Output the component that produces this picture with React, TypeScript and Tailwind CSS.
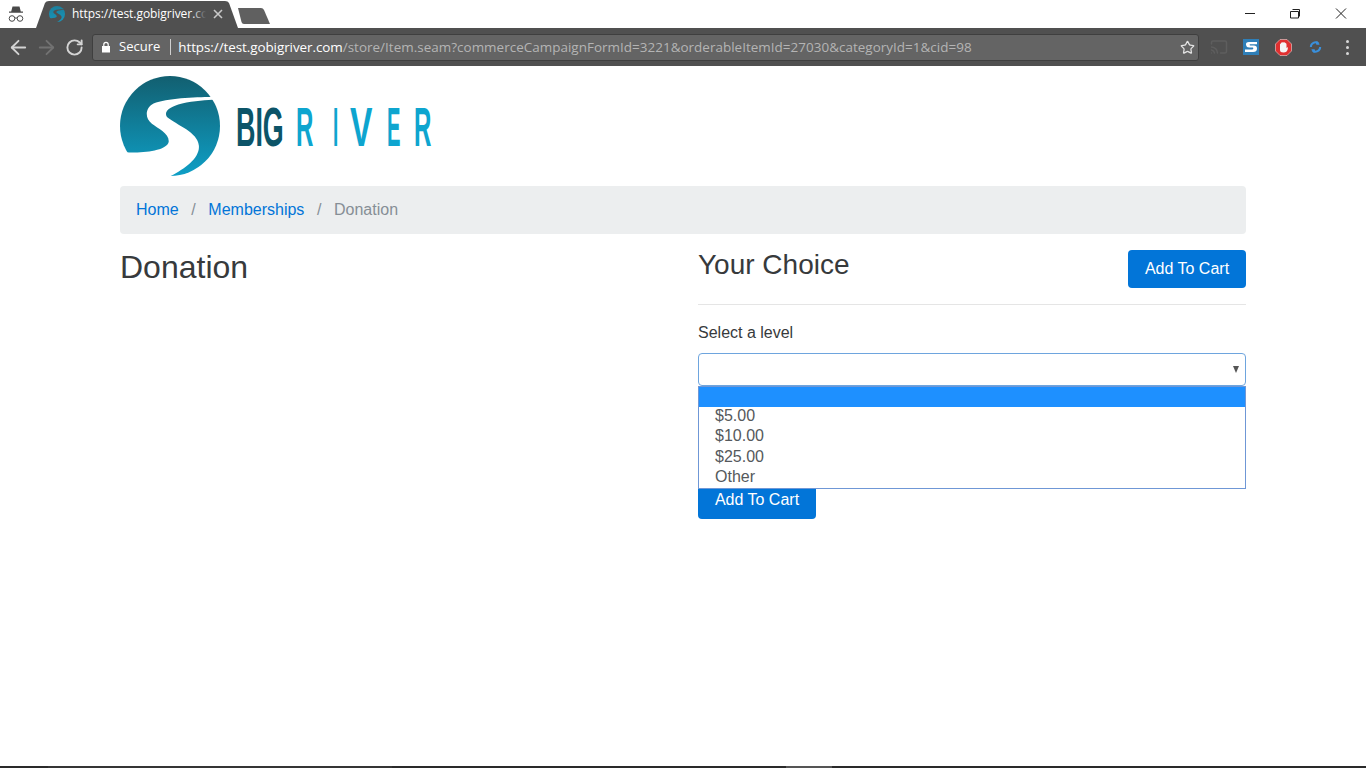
import { ArrowLeft, ArrowRight, RotateCw, Star, Cast } from 'lucide-react';

const chromeFont = "font-['Open_Sans','Noto_Sans',sans-serif]";

function LogoMark({ size, id, river = '#fff', top = '#125f70', bottom = '#0e9fc6' }: { size: number; id: string; river?: string; top?: string; bottom?: string }) {
  return (
    <svg width={size} height={size} viewBox="30 18 298 298" className="shrink-0">
      <defs>
        <linearGradient id={id} x1="0" y1="0" x2="0" y2="1">
          <stop offset="0" stopColor={top} />
          <stop offset="1" stopColor={bottom} />
        </linearGradient>
      </defs>
      <circle cx="179" cy="167" r="149" fill={`url(#${id})`} />
      <path
        d="M305 80C250 82 170 84 130 100C105 112 103 145 125 160C145 175 178 190 175 215C170 240 100 250 45 245L20 330L150 330C200 310 270 270 265 225C262 185 200 165 170 140C160 125 175 110 215 100C250 92 290 90 315 88Z"
        fill={river}
      />
    </svg>
  );
}

function Logo() {
  // letters are real text, squeezed sideways to the logo's condensed widths
  const letters = [
    { c: 'BIG', x: -1, sx: 0.48, fill: '#0c5468' },
    { c: 'R', x: 59, sx: 0.43, fill: '#0ea5cf' },
    { c: 'I', x: 96, sx: 0.34, fill: '#0ea5cf' },
    { c: 'V', x: 113, sx: 0.6, fill: '#0ea5cf' },
    { c: 'E', x: 150, sx: 0.36, fill: '#0ea5cf' },
    { c: 'R', x: 177, sx: 0.43, fill: '#0ea5cf' },
  ];
  return (
    <div className="flex h-[100px] items-center">
      <LogoMark size={100} id="logo-grad" />
      <svg width="212" height="100" viewBox="0 0 212 100" className="ml-[17px] block">
        {letters.map((l) => (
          <text key={l.x} transform={`translate(${l.x} 70) scale(${l.sx} 1)`} fontFamily="'Liberation Sans',sans-serif" fontWeight="bold" fontSize="56" fill={l.fill}>
            {l.c}
          </text>
        ))}
      </svg>
    </div>
  );
}

function TabStrip() {
  return (
    <div className="relative flex h-7 items-center bg-white">
      {/* incognito */}
      <svg width="18" height="17" viewBox="0 0 18 17" className="ml-[7px] shrink-0" fill="#4a4a4a">
        <path d="M5.500 0.500h7l1.300 5H16v1.300H2V5.500h2.200z" />
        <circle cx="5" cy="12.500" r="2.800" fill="none" stroke="#4a4a4a" strokeWidth="1" />
        <circle cx="13" cy="12.500" r="2.800" fill="none" stroke="#4a4a4a" strokeWidth="1" />
        <path d="M7.800 12h2.400" stroke="#4a4a4a" strokeWidth="1" />
      </svg>
      {/* active tab */}
      <div className="relative ml-[11px] flex h-7 w-[202px] shrink-0 items-center">
        <svg width="202" height="28" viewBox="0 0 202 28" className="absolute inset-0" fill="#505050">
          <path d="M0 28L9 3Q10 1 13 1H189Q192 1 193 3L202 28Z" />
        </svg>
        <div className="relative ml-[13px]">
          <LogoMark size={16} id="fav-grad" river="#505050" top="#1c7f9c" bottom="#1796bb" />
        </div>
        <span className={`relative ml-[7px] w-[134px] overflow-hidden whitespace-nowrap text-[12px] tracking-[-0.05px] text-white ${chromeFont}`}>
          https://test.gobigriver.co
          <span className="absolute inset-y-0 right-0 w-[14px] bg-gradient-to-r from-transparent to-[#505050]" />
        </span>
        <svg width="10" height="10" viewBox="0 0 10 10" className="relative ml-[7px]" stroke="#c8c8c8" strokeWidth="1.600">
          <path d="M1 1l8 8M9 1l-8 8" />
        </svg>
      </div>
      {/* new tab */}
      <svg width="34" height="16" viewBox="0 0 34 16" className="mt-[3px] ml-[-1px] shrink-0" fill="#606060">
        <path d="M1 0H24Q26 0 27 2L33 16H7Q5 16 4.500 14Z" />
      </svg>
      {/* window controls */}
      <div className="mr-[2px] ml-auto flex items-center">
        <svg width="46" height="28" viewBox="0 0 46 28" stroke="#222" fill="none" className="mr-[-1px]">
          <path d="M18 13.500h10" />
        </svg>
        <svg width="46" height="28" viewBox="0 0 46 28" stroke="#222" fill="none">
          <path d="M20.500 9.500h7v7M20 11.500h6.500v6.500H18.500v-6.500z" />
        </svg>
        <svg width="46" height="28" viewBox="0 0 46 28" stroke="#222" fill="none">
          <path d="M18 8.500l10 10M28 8.500l-10 10" />
        </svg>
      </div>
    </div>
  );
}

function Toolbar() {
  return (
    <div className={`flex h-[38px] items-center bg-[#505050] ${chromeFont}`}>
      <div className="ml-[4px] flex w-[84px] items-center">
        <span className="flex w-7 justify-center">
          <ArrowLeft size={23} color="#d4d4d4" strokeWidth={1.900} />
        </span>
        <span className="flex w-7 justify-center">
          <ArrowRight size={23} color="#727272" strokeWidth={1.900} />
        </span>
        <span className="flex w-7 justify-center">
          <RotateCw size={19} color="#d4d4d4" strokeWidth={2.400} />
        </span>
      </div>
      <div className="ml-[4px] flex h-[27px] w-[1107px] items-center rounded-[3px] border border-[#3f3f3f] bg-[#646464]">
        <svg width="10" height="12" viewBox="0 0 10 12" className="ml-[8px]" fill="#fff">
          <path d="M1 5h8v6.500H1z" />
          <path d="M2.800 5V3.500a2.200 2.200 0 0 1 4.400 0V5" fill="none" stroke="#fff" strokeWidth="1.200" />
        </svg>
        <span className="ml-[8px] text-[13px] text-white">Secure</span>
        <span className="ml-[10px] h-[16px] w-px bg-[#d0d0d0]" />
        <span className="ml-[7px] whitespace-nowrap text-[13.450px] tracking-[-0.07px] text-white">
          https://test.gobigriver.com
          <span className="tracking-[0.03px] text-[#b4b4b4]">/store/Item.seam?commerceCampaignFormId=3221&amp;orderableItemId=27030&amp;categoryId=1&amp;cid=98</span>
        </span>
        <Star size={15} color="#e4e4e4" strokeWidth={2} className="mr-[3px] ml-auto" />
      </div>
      <div className="ml-[11px] flex items-center">
        <Cast size={18} color="#5e5e5e" />
        <svg width="16" height="16" viewBox="0 0 16 16" className="ml-[15px]">
          <rect width="16" height="16" fill="#2f7fb8" />
          <path d="M14 3H6Q2.500 3 3 6T7 8.500H10Q11 9.500 9.500 10.500H2V13H10Q14 13 14 9.500T10 6.500H7Q6 5.500 7 5.200H14Z" fill="#fff" />
        </svg>
        <svg width="17" height="17" viewBox="0 0 17 17" className="ml-[16px]">
          <path d="M5 0.500h7l4.500 4.500v7l-4.500 4.500H5L0.500 12V5z" fill="#e03030" stroke="#f0d0d0" strokeWidth="0.600" />
          <path d="M5 8V5.500Q5 4.500 6 4.500V4Q7 2.800 8 3.500Q9.500 2.800 10.500 4Q11.500 4 11.500 5.500V9L12.800 8V10Q12 13.500 8.500 13.500T5 11z" fill="#f4f4f4" />
        </svg>
        <svg width="13" height="14" viewBox="0 0 14 14" className="ml-[17px]" fill="none" stroke="#3a90dc" strokeWidth="2.200">
          <path d="M2 7a5 5 0 0 1 8-4" />
          <path d="M12 7a5 5 0 0 1-8 4" />
          <path d="M8.500 1L11 4H8z" fill="#3a90dc" strokeWidth="1" />
          <path d="M5.500 13L3 10h3z" fill="#3a90dc" strokeWidth="1" />
        </svg>
        <div className="ml-[24px] flex flex-col gap-[3px]">
          <span className="h-[3px] w-[3px] rounded-full bg-[#d8d8d8]" />
          <span className="h-[3px] w-[3px] rounded-full bg-[#d8d8d8]" />
          <span className="h-[3px] w-[3px] rounded-full bg-[#d8d8d8]" />
        </div>
      </div>
    </div>
  );
}

function CartButton() {
  return (
    <button className="h-[38px] w-[118px] rounded bg-[#0275d8] text-center text-base text-white">
      Add To Cart
    </button>
  );
}

export default function App() {
  const options = ['$5.00', '$10.00', '$25.00', 'Other'];
  return (
    <div className="flex min-h-screen flex-col bg-white font-['Liberation_Sans',Arial,sans-serif] text-[#373a3c]">
      <TabStrip />
      <Toolbar />
      <main className="mx-auto w-[1126px] flex-1 pt-[10px]">
        <Logo />
        <nav className="mt-[10px] flex h-12 items-center rounded bg-[#eceeef] px-4 text-base">
          <a className="text-[#0275d8]">Home</a>
          <span className="px-[12.600px] text-[#868e96]">/</span>
          <a className="text-[#0275d8]">Memberships</a>
          <span className="px-[12.600px] text-[#868e96]">/</span>
          <span className="text-[#868e96]">Donation</span>
        </nav>
        <div className="mt-4 grid grid-cols-[578px_548px]">
          <h1 className="text-[32px] leading-[35px]">Donation</h1>
          <div>
            <div className="flex items-start justify-between border-b border-[#e5e5e5] pb-4">
              <h2 className="text-[28px] leading-[30px]">Your Choice</h2>
              <CartButton />
            </div>
            <label className="mt-4 block text-base leading-6">Select a level</label>
            <div className="relative mt-2">
              <div className="relative h-[33px] rounded border border-[#6ea5de] bg-white">
                <span className="absolute top-[12px] right-[6px] h-0 w-0 border-x-[3.500px] border-t-[7px] border-x-transparent border-t-[#555]" />
              </div>
              <ul className="absolute top-[33px] left-0 z-10 w-full border border-[#6f97d6] bg-white text-base leading-[20.330px] text-[#55595c]">
                <li className="h-[20px] bg-[#1e90ff]" />
                {options.map((o) => (
                  <li key={o} className="pl-4">
                    <span className="block -translate-y-px">{o}</span>
                  </li>
                ))}
              </ul>
            </div>
            <div className="mt-[95px]">
              <CartButton />
            </div>
          </div>
        </div>
      </main>
      <div className="flex h-[2px] shrink-0 bg-[#2a2a2a]">
        <span className="ml-[48px] w-[344px] bg-[#353535]" />
        <span className="ml-[394px] w-[46px] bg-[#555]" />
      </div>
    </div>
  );
}
